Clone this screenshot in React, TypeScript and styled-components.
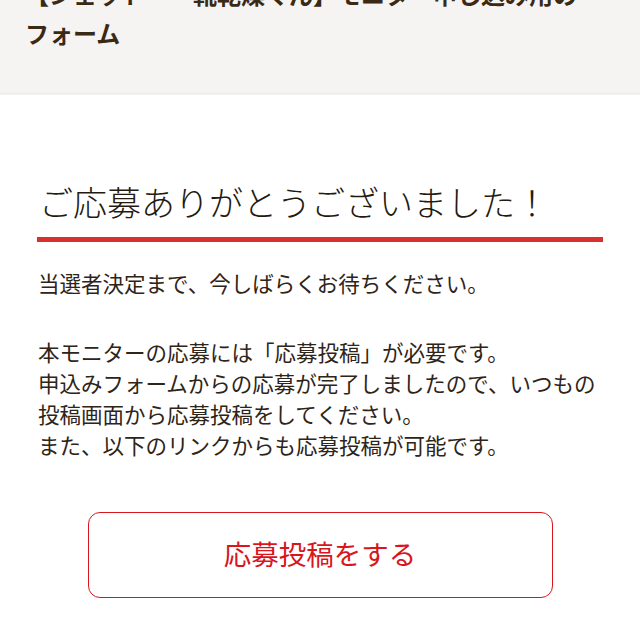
import React from "react";
import styled, { createGlobalStyle } from "styled-components";

const GlobalStyle = createGlobalStyle`
  html, body {
    margin: 0;
    padding: 0;
    background: #ffffff;
  }
  body {
    font-family: "Noto Sans CJK JP", "Noto Sans", sans-serif;
    overflow: hidden;
  }
  * { box-sizing: border-box; }
`;

const Page = styled.div`
  width: 640px;
  min-height: 640px;
  background: #ffffff;
`;

const Header = styled.header`
  background: #f5f4f2;
  padding: 0 25px 40px;
  border-bottom: 3px solid #f1f0ed;
`;

const Title = styled.h1`
  margin: -25px 0 0;
  font-size: 24px;
  line-height: 38.5px;
  font-weight: 700;
  color: #3a2914;
  letter-spacing: 0;
`;

const Content = styled.main`
  padding: 82px 37px 40px;
`;

const Heading = styled.h2`
  margin: 0;
  padding: 0 0 10px 2px;
  font-size: 34px;
  line-height: 50px;
  font-weight: 300;
  color: #231a10;
  border-bottom: 5px solid #d9302e;
`;

const Body = styled.p`
  margin: 25px 0 0;
  padding-left: 1px;
  font-size: 21.5px;
  line-height: 31px;
  color: #2e2418;
  font-weight: 400;

  & + & {
    margin-top: 38px;
  }
`;

const ButtonRow = styled.div`
  display: flex;
  justify-content: center;
  margin-top: 52px;
`;

const PostButton = styled.a`
  display: flex;
  align-items: center;
  justify-content: center;
  width: 465px;
  height: 86px;
  border: 1.5px solid #d8161c;
  border-radius: 12px;
  color: #d8161c;
  font-size: 27.5px;
  padding-bottom: 4px;
  text-decoration: none;
  background: #ffffff;
`;

export default function App() {
  return (
    <>
      <GlobalStyle />
      <Page>
        <Header>
          <Title>
            【ジェットー　靴乾燥くん】モニター申し込み用の
            <br />
            フォーム
          </Title>
        </Header>
        <Content>
          <Heading>ご応募ありがとうございました！</Heading>
          <Body>当選者決定まで、今しばらくお待ちください。</Body>
          <Body>
            本モニターの応募には「応募投稿」が必要です。
            <br />
            申込みフォームからの応募が完了しましたので、いつもの
            <br />
            投稿画面から応募投稿をしてください。
            <br />
            また、以下のリンクからも応募投稿が可能です。
          </Body>
          <ButtonRow>
            <PostButton href="#">応募投稿をする</PostButton>
          </ButtonRow>
        </Content>
      </Page>
    </>
  );
}
